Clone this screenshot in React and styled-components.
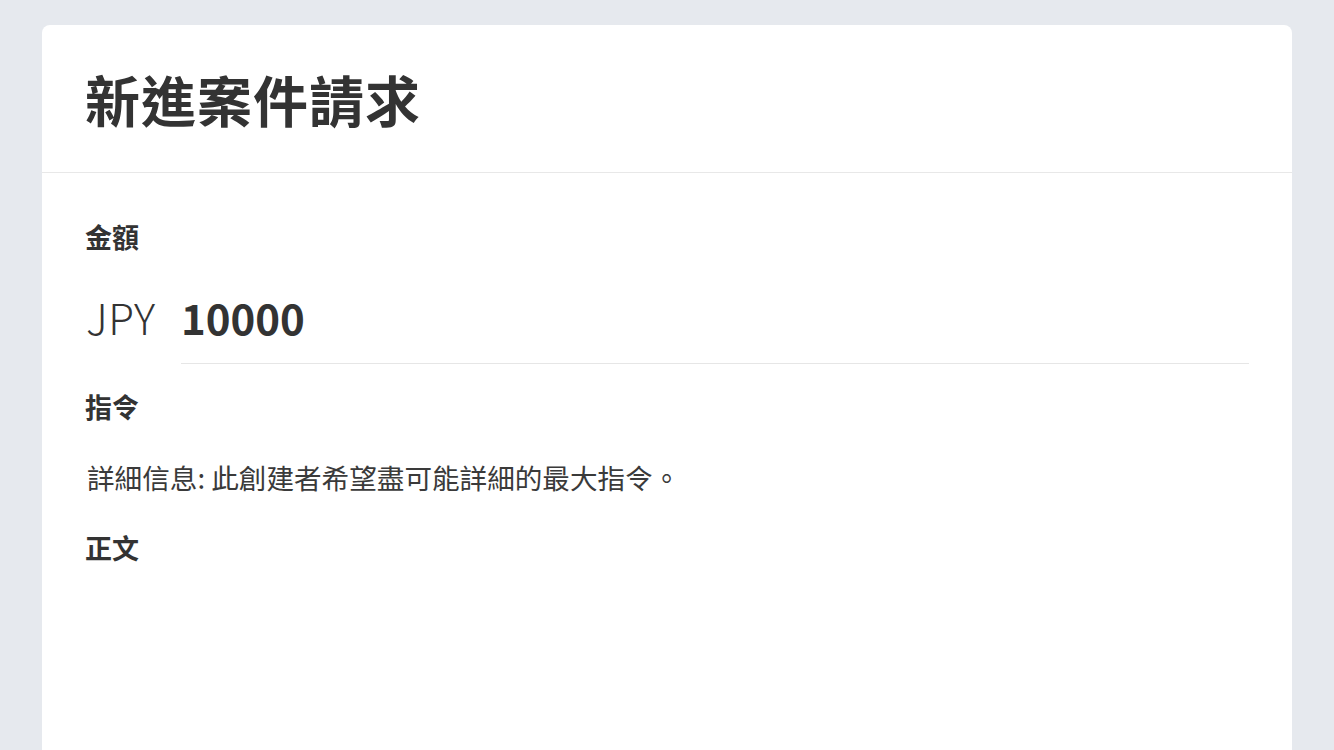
import React from "react";
import styled, { createGlobalStyle } from "styled-components";

const GlobalStyle = createGlobalStyle`
  html, body {
    margin: 0;
    padding: 0;
    background: #e6e9ee;
    font-family: "Noto Sans CJK TC", "Noto Sans", sans-serif;
    color: #333;
  }
`;

const Page = styled.div`
  padding: 25px 42px 0 42px;
  height: 750px;
  box-sizing: border-box;
  overflow: hidden;
`;

const Card = styled.div`
  background: #fff;
  border-radius: 8px 8px 0 0;
  min-height: 800px;
`;

const Header = styled.div`
  height: 147px;
  display: flex;
  align-items: center;
  padding: 0 43px;
  border-bottom: 1.5px solid #e8e8e8;
`;

const Title = styled.h1`
  margin: 0;
  font-size: 55px;
  font-weight: 700;
  line-height: 1;
  letter-spacing: 1px;
  color: #333;
`;

const Body = styled.div`
  padding: 44px 43px 0 43px;
`;

const Label = styled.div`
  font-size: 27px;
  font-weight: 700;
  line-height: 40px;
  margin-top: ${(p) => p.gap || 0}px;
`;

const AmountRow = styled.div`
  display: flex;
  align-items: flex-start;
  margin-top: 37px;
`;

const Currency = styled.span`
  width: 95px;
  padding-left: 1px;
  font-size: 42px;
  font-weight: 300;
  letter-spacing: 0.5px;
  line-height: 46px;
`;

const AmountField = styled.div`
  flex: 1;
  font-size: 42px;
  font-weight: 700;
  line-height: 46px;
  padding: 0 0 23px 0;
  border-bottom: 1.5px solid #e6e6e6;
`;

const Description = styled.p`
  margin: 30px 0 0 2px;
  font-size: 27.6px;
  line-height: 40px;
  font-weight: 400;
  color: #3a3a3a;
`;

export default function App() {
  return (
    <>
      <GlobalStyle />
      <Page>
        <Card>
          <Header>
            <Title>新進案件請求</Title>
          </Header>
          <Body>
            <Label>金額</Label>
            <AmountRow>
              <Currency>JPY</Currency>
              <AmountField>10000</AmountField>
            </AmountRow>
            <Label gap={23}>指令</Label>
            <Description>詳細信息: 此創建者希望盡可能詳細的最大指令。</Description>
            <Label gap={31}>正文</Label>
          </Body>
        </Card>
      </Page>
    </>
  );
}
